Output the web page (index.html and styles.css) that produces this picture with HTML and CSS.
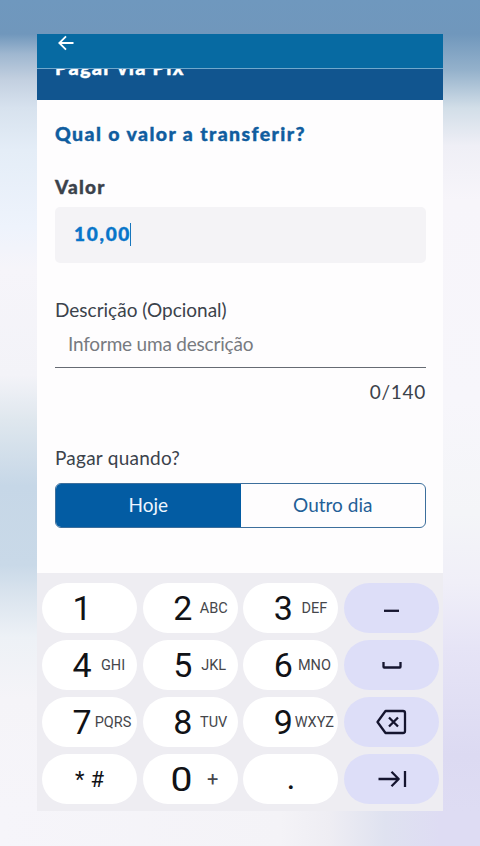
FILE: index.html
```html
<!DOCTYPE html>
<html lang="pt-BR">
<head>
<meta charset="utf-8">
<title>Pagar via Pix</title>
<link rel="stylesheet" href="styles.css">
</head>
<body>
<div class="backdrop"><span class="side-left"></span><span class="side-right"></span></div>
<main class="phone">
  <header class="topbar">
    <svg class="back" viewBox="0 0 16 16"><path d="M15.500 8H1.500M8 1.300 1.300 8 8 14.700"/></svg>
  </header>
  <div class="heading"><span class="heading-text">Pagar via Pix</span></div>
  <section class="content">
    <h1 class="question">Qual o valor a transferir?</h1>
    <div class="label-strong">Valor</div>
    <div class="amount"><span class="amount-text">10,00</span><span class="caret"></span></div>
    <div class="label label-desc">Descrição (Opcional)</div>
    <div class="field">Informe uma descrição</div>
    <div class="counter">0/140</div>
    <div class="label label-when">Pagar quando?</div>
    <div class="segmented">
      <div class="segment active">Hoje</div>
      <div class="segment other">Outro dia</div>
    </div>
  </section>
  <section class="keyboard">
    <div class="key"><b>1</b></div>
    <div class="key"><b>2</b><i>ABC</i></div>
    <div class="key"><b>3</b><i>DEF</i></div>
    <div class="key action"><svg viewBox="0 0 32 32"><path d="M8 18.800h15"/></svg></div>
    <div class="key"><b>4</b><i>GHI</i></div>
    <div class="key"><b>5</b><i>JKL</i></div>
    <div class="key"><b>6</b><i>MNO</i></div>
    <div class="key action"><svg viewBox="0 0 32 32"><path d="M7.500 13v4.800q0 .7.700.7h15.600q.7 0 .7-.7V13"/></svg></div>
    <div class="key"><b>7</b><i>PQRS</i></div>
    <div class="key"><b>8</b><i>TUV</i></div>
    <div class="key"><b>9</b><i>WXYZ</i></div>
    <div class="key action"><svg viewBox="0 0 32 32"><path d="M9.500 5H27q2 0 2 2v18q0 2-2 2H9.500L1.500 16ZM13 11.500l9 9M22 11.500l-9 9"/></svg></div>
    <div class="key symbols"><span class="star">*</span><span>#</span></div>
    <div class="key zero"><b>0</b><i>+</i></div>
    <div class="key dot"><span>.</span></div>
    <div class="key action"><svg viewBox="0 0 32 32"><path d="M2.500 16h20M15.500 8.800l7.200 7.200-7.200 7.200M29 8v16"/></svg></div>
  </section>
</main>
</body>
</html>
```
FILE: styles.css
```css
* { box-sizing: border-box; }
body {
  margin: 0;
  height: 846px;
  padding: 34px 37px 35px;
  overflow: hidden;
  font-family: Lato, "Liberation Sans", sans-serif;
}
.backdrop {
  position: absolute;
  inset: 0;
  z-index: -1;
  display: flex;
  background: linear-gradient(90deg, #f6f5fa 0, #f4f3f7 280px, #eeedf3 330px, #dfe2f0 385px, #dedcf3 440px);
}
.backdrop span { height: 811px; }
.side-left {
  width: 240px;
  background: linear-gradient(180deg, #6f98be 0, #7097bc 34px, #9fb7d0 54px, #c3d0e0 80px, #d7e2ee 108px, #e4edf7 150px, #eef3fc 227px, #f6f5fa 270px, #f3f3f8 375px, #dfe7ee 420px, #c6d7e7 486px, #c9d9e8 565px, #dae4ee 595px, #edf1f6 637px, #f5f4f8 700px, #f6f5fa 811px);
}
.side-right {
  width: 240px;
  background: linear-gradient(180deg, #6f98be 0, #7097bc 34px, #94b1cb 70px, #d2dee8 108px, #efeff6 146px, #f7f5fa 200px, #f7f6fb 400px, #f4f5f8 513px, #f0eff8 583px, #e6e4f6 648px, #dcdaf2 755px, #dedcf3 811px);
}
.phone { width: 406px; height: 777px; overflow: hidden; background: #fefdfe; }
.topbar { height: 35px; padding-top: 1px; background: #076aa2; border-bottom: 1px solid #70a8cc; }
.back { display: block; width: 16px; height: 16px; margin-left: 21px; fill: none; stroke: #fff; stroke-width: 1.8; }
.heading { display: flex; align-items: flex-start; height: 31px; padding-left: 18px; overflow: hidden; background: #11558f; color: #fff; }
.heading-text { margin-top: -14px; font-size: 20px; font-weight: 900; line-height: 24px; letter-spacing: 1.2px; white-space: nowrap; -webkit-text-stroke: .4px; }
.content { height: 473px; padding: 22px 17px 0 18px; color: #3b424b; font-size: 19px; line-height: 24px; }
.question { margin: 0; font-size: 19.5px; font-weight: 900; line-height: 24px; letter-spacing: 1.4px; color: #105d9f; white-space: nowrap; -webkit-text-stroke: .4px; }
.label-strong { margin-top: 29px; font-weight: 900; letter-spacing: 1.2px; -webkit-text-stroke: .4px; }
.amount { display: flex; align-items: center; height: 56px; margin-top: 8px; padding: 0 0 2px 19px; border-radius: 5px; background: #f4f3f6; color: #0875c9; font-weight: 900; }
.amount-text { letter-spacing: 1.7px; -webkit-text-stroke: .4px; }
.caret { width: 1px; height: 23px; margin-left: -1px; background: #1776bd; }
.label-desc { margin-top: 35px; }
.field { height: 46px; padding: 10px 0 0 13px; border-bottom: 1px solid #666b73; color: #777a80; letter-spacing: -.2px; }
.counter { margin-top: 12px; text-align: right; letter-spacing: .7px; }
.label-when { margin-top: 42px; letter-spacing: .25px; }
.segmented { display: flex; height: 45px; margin-top: 13px; border: 1px solid #3d6f9c; border-radius: 6px; overflow: hidden; line-height: 41px; text-align: center; }
.segment { flex: 1; color: #235f97; }
.segment.active { background: #035ca3; color: #eef6ff; }
.keyboard { display: grid; grid-template-columns: repeat(4, 95px); grid-auto-rows: 50px; gap: 7px 5.7px; height: 238px; padding: 10px 0 0 5px; background: #eeedf2; font-family: Roboto, sans-serif; }
.key { display: grid; grid-template-columns: 20px 40px; column-gap: 1px; align-items: center; justify-items: center; padding-left: 30px; border-radius: 25px; background: #fff; color: #111216; }
.key b { font-size: 34px; font-weight: 400; line-height: 50px; }
.key i { font-size: 14.5px; font-style: normal; color: #45464b; }
.key.action { display: flex; justify-content: center; padding: 0; background: #dddef8; }
.key.action svg { width: 32px; height: 32px; fill: none; stroke: #15152f; stroke-width: 2.3; stroke-linejoin: round; }
.key.symbols { display: flex; gap: 6px; padding-left: 33px; font-size: 22px; }
.key.zero { padding-left: 29px; }
.key.zero b { transform: scaleX(1.15); }
.key.zero i { font-size: 20px; }
.key.dot { display: flex; padding: 0 0 5px 43px; font-size: 34px; }
```
